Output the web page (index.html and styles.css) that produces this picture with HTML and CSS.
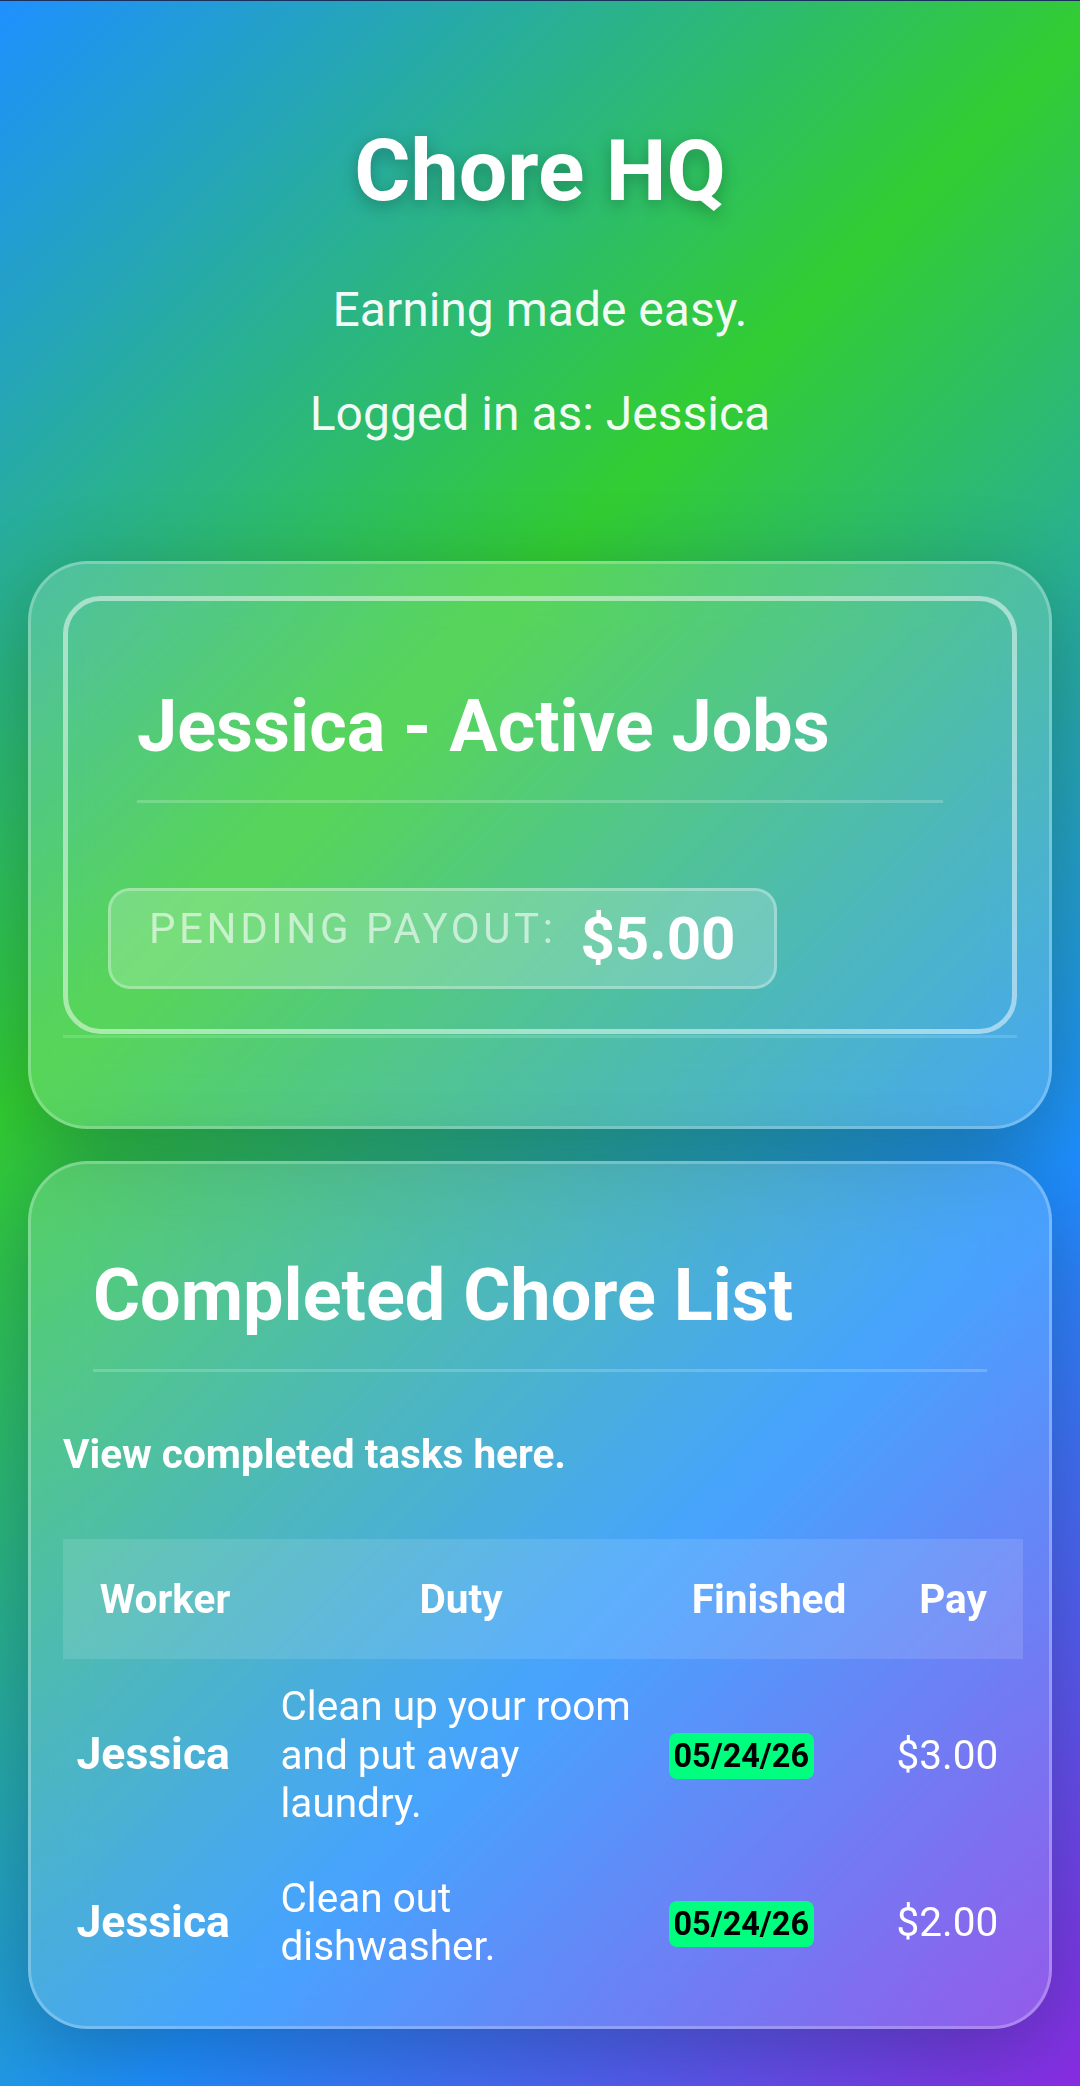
FILE: index.html
```html
<!DOCTYPE html>
<html lang="en">
<head>
  <meta charset="UTF-8" />
  <title>Chore HQ</title>
  <link rel="stylesheet" href="styles.css">
</head>
<body>

<header>
  <h1>Chore HQ</h1>
  <p class="tagline">Earning made easy.</p>
  <p class="user">Logged in as: Jessica</p>
</header>

<main>
  <section class="card">
    <div class="jobs-box">
      <h2 class="card-title jobs-title">Jessica - Active Jobs</h2>
      <div class="payout">
        <span class="payout-label">Pending Payout:</span>
        <span class="payout-amount">$5.00</span>
      </div>
    </div>
    <hr class="divider">
  </section>

  <section class="card">
    <h2 class="card-title list-title">Completed Chore List</h2>
    <p class="note">View completed tasks here.</p>
    <table class="chores">
      <thead>
        <tr>
          <th class="col-worker">Worker</th>
          <th class="col-duty">Duty</th>
          <th class="col-date">Finished</th>
          <th class="col-pay">Pay</th>
        </tr>
      </thead>
      <tbody>
        <tr>
          <td><strong class="worker">Jessica</strong></td>
          <td>Clean up your room and put away laundry.</td>
          <td><span class="date-badge">05/24/26</span></td>
          <td>$3.00</td>
        </tr>
        <tr>
          <td><strong class="worker">Jessica</strong></td>
          <td>Clean out dishwasher.</td>
          <td><span class="date-badge">05/24/26</span></td>
          <td>$2.00</td>
        </tr>
      </tbody>
    </table>
  </section>
</main>

</body>
</html>
```

FILE: styles.css
```css
html {
  min-height: 100%;
  background: linear-gradient(135deg, #1e90ff 0%, #32cd32 35%, #1e90ff 70%, #8a2be2 100%);
}
body {
  font-family: Roboto, "Liberation Sans", sans-serif;
  color: white;
  margin: 0;
  padding: 0;
  border-top: 1px solid #1b2f5c;
}
header {
  padding: 119px 28px 0;
  text-align: center;
}
header h1 {
  margin: 0 0 59px;
  font-size: 86px;
  line-height: 101px;
  font-weight: bold;
  text-shadow: 0 5px 16px rgba(0,0,0,0.25);
}
header p {
  margin: 0;
  font-size: 48px;
  line-height: 60.5px;
  color: rgba(255,255,255,0.95);
}
header .tagline {
  margin-bottom: 43px;
}
main {
  padding: 117px 28px 40px;
}
.card {
  background: rgba(255,255,255,0.18);
  border: 3px solid rgba(255,255,255,0.25);
  border-radius: 60px;
  padding: 32px;
  margin-bottom: 32px;
  box-shadow: 0 22px 86px rgba(0,0,0,0.25);
  backdrop-filter: blur(27px);
}
.card-title {
  font-size: 72px;
  line-height: 86px;
  font-weight: bold;
  padding-bottom: 30px;
  border-bottom: 3px solid rgba(255,255,255,0.2);
}
.jobs-box {
  border: 5px solid rgba(255,255,255,0.5);
  border-radius: 38px;
  padding: 40px;
}
.jobs-title {
  margin: 43px 29px 85px;
}
.payout {
  display: inline-flex;
  align-items: flex-start;
  gap: 24px;
  padding: 13px 38px;
  background: rgba(255,255,255,0.2);
  border: 3px solid rgba(255,255,255,0.3);
  border-radius: 22px;
}
.payout-label {
  font-size: 42px;
  line-height: 49px;
  letter-spacing: 3.6px;
  text-transform: uppercase;
  color: rgba(255,255,255,0.6);
}
.payout-amount {
  font-size: 60px;
  line-height: 69px;
  font-weight: bold;
}
.divider {
  border: 0;
  border-top: 3px solid rgba(255,255,255,0.15);
  margin: 1px 0 56px;
}
.list-title {
  margin: 57px 30px 59px;
}
.note {
  margin: 0 0 60px;
  font-size: 40.5px;
  line-height: 47.5px;
  font-weight: bold;
}
.chores {
  width: 100%;
  table-layout: fixed;
  border-collapse: collapse;
  font-size: 40.5px;
  line-height: 48.6px;
}
.chores th {
  box-sizing: border-box;
  padding: 36px 13.5px;
  background: rgba(255,255,255,0.12);
  font-weight: bold;
  text-align: center;
}
.chores td {
  padding: 23px 13.5px;
  text-align: left;
}
.col-worker { width: 204px; }
.col-duty { width: 388px; }
.col-date { width: 228px; }
.col-pay { width: 140px; }
.worker {
  font-size: 44.5px;
}
.date-badge {
  background: #00ff7f;
  color: #000;
  font-weight: bold;
  font-size: 32.4px;
  padding: 4px 5px;
  border-radius: 8px;
}
```
